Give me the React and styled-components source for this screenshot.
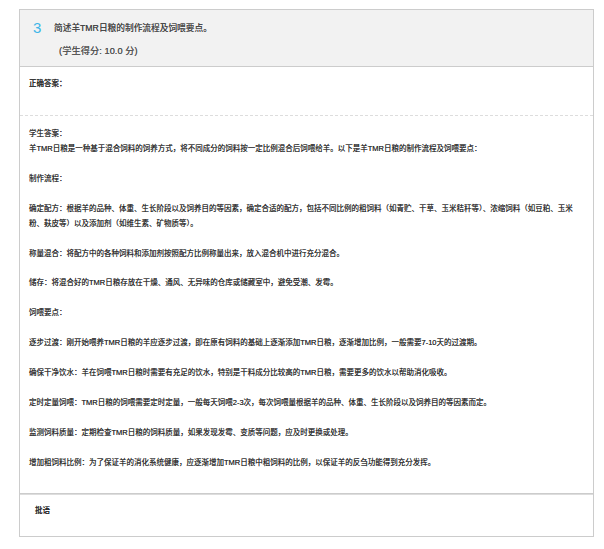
import React from "react";
import styled, { createGlobalStyle } from "styled-components";

const Global = createGlobalStyle`
  html, body { margin: 0; padding: 0; background: #fff; }
  body {
    font-family: "Liberation Sans", "Noto Sans CJK SC", sans-serif;
    color: #2b2b2b;
    text-shadow: 0 0 0.35px #555;
  }
`;

const Page = styled.div`
  width: 604px;
  height: 549px;
  padding: 9px 10px 0 19px;
  box-sizing: border-box;
`;

const Card = styled.div`
  width: 575px;
  border: 1px solid #ccc;
  box-sizing: border-box;
`;

const Header = styled.div`
  height: 56px;
  background: #f2f2f2;
  border-bottom: 1px solid #ccc;
  padding-left: 13px;
`;

const TitleRow = styled.div`
  display: flex;
  align-items: center;
  height: 35px;
`;

const Num = styled.span`
  font-size: 15px;
  color: #3db6e8;
  text-shadow: none;
  width: 21px;
`;

const Title = styled.span`
  font-size: 8.7px;
  color: #444;
`;

const Score = styled.div`
  font-size: 9.2px;
  line-height: 12px;
  letter-spacing: 0.08px;
  padding-left: 26px;
  color: #555;
`;

const Correct = styled.div`
  height: 49px;
  padding: 9px 0 0 9px;
  box-sizing: border-box;
  font-size: 7.5px;
  line-height: 15px;
  font-weight: 500;
  border-bottom: 1px dashed #ddd;
`;

const Answer = styled.div`
  padding: 11px 10px 22px 9px;
  border-bottom: 1px solid #ccc;
  box-shadow: 0 1px 0 #ddd;
`;

const Line = styled.p`
  margin: 0;
  font-size: 7.5px;
  line-height: 14.95px;
  min-height: 14.95px;
`;

const Comment = styled.div`
  height: 42px;
  padding: 9px 0 0 15px;
  box-sizing: border-box;
  font-size: 7.5px;
  line-height: 15px;
  font-weight: 500;
`;

const lines = [
  "学生答案：",
  "羊TMR日粮是一种基于混合饲料的饲养方式，将不同成分的饲料按一定比例混合后饲喂给羊。以下是羊TMR日粮的制作流程及饲喂要点：",
  "",
  "制作流程：",
  "",
  "确定配方：根据羊的品种、体重、生长阶段以及饲养目的等因素，确定合适的配方，包括不同比例的粗饲料（如青贮、干草、玉米秸秆等）、浓缩饲料（如豆粕、玉米粉、麸皮等）以及添加剂（如维生素、矿物质等）。",
  "",
  "称量混合：将配方中的各种饲料和添加剂按照配方比例称量出来，放入混合机中进行充分混合。",
  "",
  "储存：将混合好的TMR日粮存放在干燥、通风、无异味的仓库或储藏室中，避免受潮、发霉。",
  "",
  "饲喂要点：",
  "",
  "逐步过渡：刚开始喂养TMR日粮的羊应逐步过渡，即在原有饲料的基础上逐渐添加TMR日粮，逐渐增加比例，一般需要7-10天的过渡期。",
  "",
  "确保干净饮水：羊在饲喂TMR日粮时需要有充足的饮水，特别是干料成分比较高的TMR日粮，需要更多的饮水以帮助消化吸收。",
  "",
  "定时定量饲喂：TMR日粮的饲喂需要定时定量，一般每天饲喂2-3次，每次饲喂量根据羊的品种、体重、生长阶段以及饲养目的等因素而定。",
  "",
  "监测饲料质量：定期检查TMR日粮的饲料质量，如果发现发霉、变质等问题，应及时更换或处理。",
  "",
  "增加粗饲料比例：为了保证羊的消化系统健康，应逐渐增加TMR日粮中粗饲料的比例，以保证羊的反刍功能得到充分发挥。",
];

export default function App() {
  return (
    <Page>
      <Global />
      <Card>
        <Header>
          <TitleRow>
            <Num>3</Num>
            <Title>简述羊TMR日粮的制作流程及饲喂要点。</Title>
          </TitleRow>
          <Score>(学生得分: 10.0 分)</Score>
        </Header>
        <Correct>正确答案：</Correct>
        <Answer>
          {lines.map((t, i) => (
            <Line key={i}>{t}</Line>
          ))}
        </Answer>
        <Comment>批语</Comment>
      </Card>
    </Page>
  );
}
